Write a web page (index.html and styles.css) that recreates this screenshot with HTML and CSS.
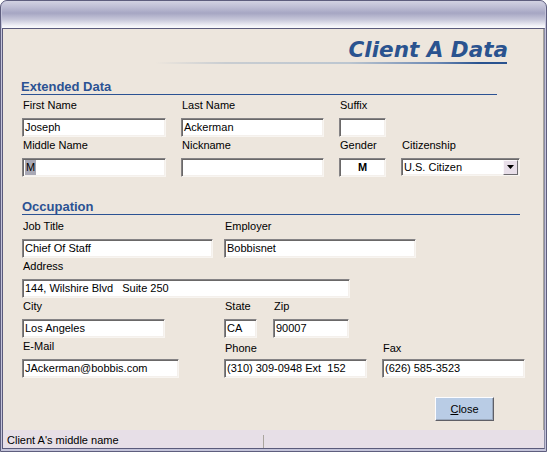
FILE: index.html
```html
<!DOCTYPE html>
<html lang="en">
<head>
    <meta charset="UTF-8">
    <meta name="viewport" content="width=device-width, initial-scale=1.0">
    <title>Client A Data</title>
    <link rel="stylesheet" href="styles.css">
</head>
<body>
    <div class="window">
        <div class="titlebar"></div>
        <div class="client">
            <div class="panel">
                <div class="banner">
                    <h1 class="banner-title">Client A Data</h1>
                    <div class="banner-rule"></div>
                </div>

                <h2 class="group-head group-head-ext">Extended Data</h2>
                <div class="row row-first">
                    <div class="field w144"><label>First Name</label><div class="box">Joseph</div></div>
                    <div class="field w143 ml15"><label>Last Name</label><div class="box">Ackerman</div></div>
                    <div class="field w47 ml15"><label>Suffix</label><div class="box"></div></div>
                </div>
                <div class="row">
                    <div class="field w144"><label>Middle Name</label><div class="box"><span class="sel">M</span></div></div>
                    <div class="field w143 ml15"><label>Nickname</label><div class="box"></div></div>
                    <div class="field w47 ml15"><label>Gender</label><div class="box box-center">M</div></div>
                    <div class="field w119 ml15">
                        <label>Citizenship</label>
                        <div class="box combo">
                            <span class="combo-text">U.S. Citizen</span>
                            <span class="combo-btn">
                                <svg width="7" height="4" viewBox="0 0 7 4"><path d="M0 0h7L3.5 4z" fill="#000"/></svg>
                            </span>
                        </div>
                    </div>
                </div>

                <h2 class="group-head group-head-occ">Occupation</h2>
                <div class="row row-first">
                    <div class="field w191"><label>Job Title</label><div class="box">Chief Of Staff</div></div>
                    <div class="field w192 ml11"><label>Employer</label><div class="box">Bobbisnet</div></div>
                </div>
                <div class="row">
                    <div class="field w328"><label>Address</label><div class="box">144, Wilshire Blvd &nbsp; Suite 250</div></div>
                </div>
                <div class="row">
                    <div class="field w143"><label>City</label><div class="box">Los Angeles</div></div>
                    <div class="field w33 ml59"><label>State</label><div class="box">CA</div></div>
                    <div class="field w76 ml16"><label>Zip</label><div class="box">90007</div></div>
                </div>
                <div class="row">
                    <div class="field w157"><label>E-Mail</label><div class="box">JAckerman@bobbis.com</div></div>
                    <div class="field w143 ml45 low"><label>Phone</label><div class="box">(310) 309-0948 Ext &nbsp;152</div></div>
                    <div class="field w143 ml15 low"><label>Fax</label><div class="box">(626) 585-3523</div></div>
                </div>

                <div class="actions">
                    <button class="btn"><u>C</u>lose</button>
                </div>
            </div>
            <div class="statusbar">
                <span class="status-pane">Client A's middle name</span>
                <span class="status-sep"></span>
            </div>
        </div>
    </div>
</body>
</html>
```

FILE: styles.css
```css
body {
    margin: 0;
    font-family: "Liberation Sans", Arial, sans-serif;
    font-size: 11px;
    color: #000;
}
.window {
    box-sizing: border-box;
    width: 547px;
    height: 452px;
    border: 1px solid #5e5e7e;
    border-radius: 7px 7px 0 0;
    background: #c4c4da;
    padding: 0 1px 2px 1px;
    display: flex;
    flex-direction: column;
}
.titlebar {
    height: 27px;
    flex: none;
    border-radius: 6px 6px 0 0;
    background: linear-gradient(#d2d2e2 0%, #c0c0d6 20%, #a6a6c3 45%, #c8c8da 70%, #f2f2f7 92%, #fbfbfd 100%);
}
.client {
    flex: 1;
    display: flex;
    flex-direction: column;
    border: 1px solid #5b5b7b;
    border-right-color: #8c8ca6;
}
.panel {
    flex: 1;
    background: #ede6dd;
    border-right: 1px solid #a7a39c;
    padding-top: 9px;
}

/* heading banner */
.banner-title {
    margin: 0;
    padding-right: 35px;
    text-align: right;
    font-family: "DejaVu Sans", Verdana, sans-serif;
    font-weight: bold;
    font-style: italic;
    font-size: 21.5px;
    line-height: 24px;
    color: #2a538f;
}
.banner-rule {
    width: 352px;
    height: 2px;
    margin: 0 36px 0 auto;
    background: linear-gradient(to right, rgba(237, 230, 221, 0) 0%, #c9cdd1 20%, #bcc6d0 55%, #6d89b3 80%, #2a538f 92%);
}

/* section headings */
.group-head {
    margin: 0;
    font-size: 13px;
    font-weight: bold;
    line-height: 14px;
    color: #2b5293;
    border-bottom: 1px solid #2b5293;
}
.group-head-ext {
    margin-top: 16px;
    margin-left: 18px;
    width: 476px;
}
.group-head-occ {
    margin-top: 23px;
    margin-left: 19px;
    width: 498px;
}

/* rows of fields */
.row {
    display: flex;
    padding-left: 19px;
    margin-top: 2px;
}
.row-first {
    margin-top: 4px;
}
.group-head-occ + .row-first {
    margin-top: 5px;
}
.field label {
    display: block;
    line-height: 13px;
    margin-bottom: 6px;
    padding-left: 1px;
}
.field.low label {
    padding-top: 2px;
    margin-bottom: 4px;
}
.w33 { width: 33px; }
.w47 { width: 47px; }
.w76 { width: 76px; }
.w119 { width: 119px; }
.w143 { width: 143px; }
.w144 { width: 144px; }
.w157 { width: 157px; }
.w191 { width: 191px; }
.w192 { width: 192px; }
.w328 { width: 328px; }
.ml11 { margin-left: 11px; }
.ml15 { margin-left: 15px; }
.ml16 { margin-left: 16px; }
.ml45 { margin-left: 45px; }
.ml59 { margin-left: 59px; }

.box {
    box-sizing: border-box;
    height: 19px;
    line-height: 17px;
    padding: 0 2px;
    background: #fff;
    border: 1px solid;
    border-color: #858385 #f8f5f1 #f8f5f1 #858385;
    box-shadow: inset 1px 1px 0 #6a6868, inset -1px -1px 0 #f4f0ec;
    white-space: pre;
    overflow: hidden;
}
.box-center {
    text-align: center;
    font-weight: bold;
}
.sel {
    display: inline-block;
    background: #a9a9b6;
    line-height: 15px;
    padding: 0 1px;
    vertical-align: top;
    margin-top: 1px;
}
.combo {
    display: flex;
    align-items: center;
    height: 18px;
    padding-right: 1px;
}
.combo-text {
    flex: 1;
}
.combo-btn {
    box-sizing: border-box;
    width: 15px;
    height: 15px;
    display: flex;
    align-items: center;
    justify-content: center;
    background: #e8dfe9;
    border: 1px solid;
    border-color: #fbf8fb #6c6a6e #6c6a6e #fbf8fb;
}

/* close button */
.actions {
    display: flex;
    justify-content: flex-end;
    margin-top: 19px;
    padding-right: 49px;
}
.btn {
    box-sizing: border-box;
    width: 59px;
    height: 24px;
    padding: 0;
    font-family: inherit;
    font-size: 11px;
    color: #000;
    background: #b9cce5;
    border: 1px solid;
    border-color: #fdfdff #5f5f66 #5f5f66 #fdfdff;
    box-shadow: inset -1px -1px 0 #9aa8bc;
    cursor: pointer;
}

/* status bar */
.statusbar {
    box-sizing: border-box;
    height: 18px;
    flex: none;
    display: flex;
    background: #e7dfe7;
    padding-top: 2px;
    line-height: 16px;
}
.status-pane {
    width: 256px;
    padding-left: 4px;
    white-space: nowrap;
}
.status-sep {
    width: 1px;
    height: 13px;
    align-self: flex-end;
    background: #aaa59e;
}
```
